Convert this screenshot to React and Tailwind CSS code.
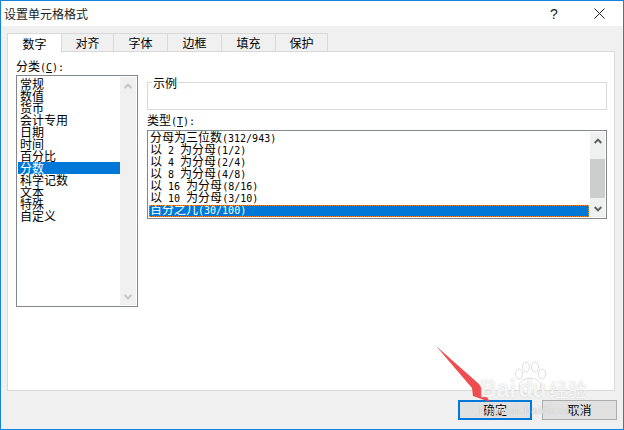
import React from 'react';

const tabs = [
    { label: '对齐', width: 'w-[52px]' },
    { label: '字体', width: 'w-[54px]' },
    { label: '边框', width: 'w-[54px]' },
    { label: '填充', width: 'w-[54px]' },
    { label: '保护', width: 'w-[52px]' },
];

const categories = ['常规', '数值', '货币', '会计专用', '日期', '时间', '百分比', '分数', '科学记数', '文本', '特殊', '自定义'];

const types = [
    '分母为三位数(312/943)',
    '以 2 为分母(1/2)',
    '以 4 为分母(2/4)',
    '以 8 为分母(4/8)',
    '以 16 为分母(8/16)',
    '以 10 为分母(3/10)',
];

// latin runs sit at half the width of a CJK cell, like the dialog's bitmap font
const Latin = ({ children, underline }) => (
    <span className={`text-[10px] whitespace-pre font-['DejaVu_Sans_Mono',monospace] ${underline ? 'underline' : ''}`}>
        {children}
    </span>
);

const Mixed = ({ text }) => (
    <>
        {text.split(/([\x20-\x7e]+)/).map((part, i) =>
            /^[\x20-\x7e]+$/.test(part) ? <Latin key={i}>{part}</Latin> : <span key={i}>{part}</span>
        )}
    </>
);

const ScrollArrow = ({ up, dim }) => (
    <div className="h-[17px] flex items-center justify-center">
        <svg width="8" height="6" viewBox="0 0 8 6" className={dim ? 'text-[#c4c4c4]' : 'text-[#606060]'}>
            <path d={up ? 'M0.7 5 L4 1.6 L7.3 5' : 'M0.7 1 L4 4.4 L7.3 1'} fill="none" stroke="currentColor" strokeWidth="2" />
        </svg>
    </div>
);

const App = () => {
    return (
        <div
            className="relative w-[624px] h-[430px] overflow-hidden border border-[#1883d7] bg-[#f0f0f0] text-[12px] leading-[12px] text-black flex flex-col"
            style={{ fontFamily: '"Noto Sans CJK SC", "Liberation Sans", sans-serif' }}
        >
            {/* title bar */}
            <div className="h-[25px] bg-white flex items-center shrink-0">
                <span className="ml-[3px] flex-1 text-[#222]">设置单元格格式</span>
                <span className="w-[8px] mr-[36px] text-[14px] text-[#222] font-['Liberation_Sans',sans-serif]">?</span>
                <svg width="11" height="11" viewBox="0 0 11 11" className="mr-[18px] text-[#222]">
                    <path d="M0.5 0.5 L10.5 10.5 M10.5 0.5 L0.5 10.5" stroke="currentColor" strokeWidth="1" />
                </svg>
            </div>

            {/* tabs */}
            <div className="h-[26px] flex items-end pl-[6px] shrink-0 relative z-10">
                <div className="w-[55px] h-[20px] -mb-px bg-white border border-b-0 border-[#d9d9d9] flex items-center justify-center">数字</div>
                {tabs.map(tab => (
                    <div key={tab.label} className={`${tab.width} h-[19px] border border-l-0 border-[#d9d9d9] flex items-center justify-center`}>
                        {tab.label}
                    </div>
                ))}
            </div>

            {/* panel */}
            <div className="ml-[6px] mr-[8px] h-[340px] -mt-px bg-white border border-[#d9d9d9] flex shrink-0 pl-[8px] pt-[8px]">
                <div className="w-[122px] mr-[9px] shrink-0">
                    <div className="h-[15px] leading-[11px]">分类<Latin>(</Latin><Latin underline>C</Latin><Latin>):</Latin></div>
                    <div className="h-[232px] border border-[#828790] p-px flex">
                        <div className="flex-1 pt-px">
                            {categories.map(cat => (
                                <div
                                    key={cat}
                                    className={`h-[12px] pl-[2px] whitespace-nowrap ${cat === '分数' ? 'bg-[#0078d7] text-white' : ''}`}
                                >
                                    {cat}
                                </div>
                            ))}
                        </div>
                        <div className="w-[16px] bg-[#f0f0f0] flex flex-col justify-between">
                            <ScrollArrow up dim />
                            <ScrollArrow dim />
                        </div>
                    </div>
                </div>

                <div className="w-[460px] shrink-0">
                    {/* sample group */}
                    <div className="relative h-[28px] mt-[22px] border border-[#d9d9d9]">
                        <span className="absolute left-[4px] -top-[6px] bg-white px-px">示例</span>
                    </div>
                    <div className="h-[12px] mt-[5px] mb-[3px] leading-[9px]">类型<Latin>(</Latin><Latin underline>T</Latin><Latin>):</Latin></div>
                    <div className="h-[89px] border border-[#828790] p-px flex">
                        <div className="flex-1 min-w-0">
                            {types.map(t => (
                                <div key={t} className="h-[12px] leading-[10px] pl-px whitespace-pre"><Mixed text={t} /></div>
                            ))}
                            <div className="h-[12px] leading-[8px] mt-px pl-px bg-[#0078d7] text-white outline-1 outline-dotted -outline-offset-1 outline-[#f28c1e]">
                                <Mixed text="百分之几(30/100)" />
                            </div>
                        </div>
                        <div className="w-[15px] ml-px bg-[#f0f0f0] flex flex-col">
                            <ScrollArrow up />
                            <div className="h-[10px]" />
                            <div className="h-[39px] bg-[#cdcdcd]" />
                            <div className="flex-1" />
                            <ScrollArrow />
                        </div>
                    </div>
                </div>
            </div>

            {/* buttons */}
            <div className="flex justify-end gap-[10px] pr-[6px] pt-[9px]">
                <button className="w-[74px] h-[20px] bg-[#e1e1e1] border-2 border-[#0078d7] flex items-center justify-center">确定</button>
                <button className="w-[75px] h-[20px] bg-[#e1e1e1] border border-[#adadad] flex items-center justify-center">取消</button>
            </div>

            {/* annotation arrow */}
            <svg className="absolute left-[-1px] top-[-1px] pointer-events-none" width="624" height="430" viewBox="0 0 624 430">
                <polygon points="436,346 479,384 490,402 473,396 472,388" fill="#ef4c4f" />
                {/* watermark paw */}
                <g fill="#ffffff" fillOpacity="0.55" stroke="#c8c8c8" strokeOpacity="0.6" strokeWidth="1">
                    <ellipse cx="519" cy="374" rx="3.5" ry="5" />
                    <ellipse cx="526" cy="367" rx="3.5" ry="5" />
                    <ellipse cx="535" cy="367" rx="3.5" ry="5" />
                    <ellipse cx="542" cy="374" rx="3.5" ry="5" />
                    <ellipse cx="530" cy="386" rx="11" ry="8" />
                </g>
            </svg>

            {/* watermark */}
            <div className="absolute left-[479px] top-[376px] text-white/80 [text-shadow:0_0_1.5px_#c4c4c4] font-bold text-[23px] leading-[24px] font-['Liberation_Sans',sans-serif] pointer-events-none">
                Bai<span className="ml-[3px] tracking-[-0.5px]">du</span>
            </div>
            <div className="absolute left-[548px] top-[378px] text-white/80 [text-shadow:0_0_1.5px_#c4c4c4] text-[19px] leading-[20px] pointer-events-none">经验</div>
            <div className="absolute left-[478px] top-[403px] text-white/70 [text-shadow:0_0_1px_#a8a8a8] text-[11px] leading-[12px] tracking-[0.9px] font-['Liberation_Sans',sans-serif] pointer-events-none">
                jingyan.baidu.com
            </div>
        </div>
    );
};

export default App;
